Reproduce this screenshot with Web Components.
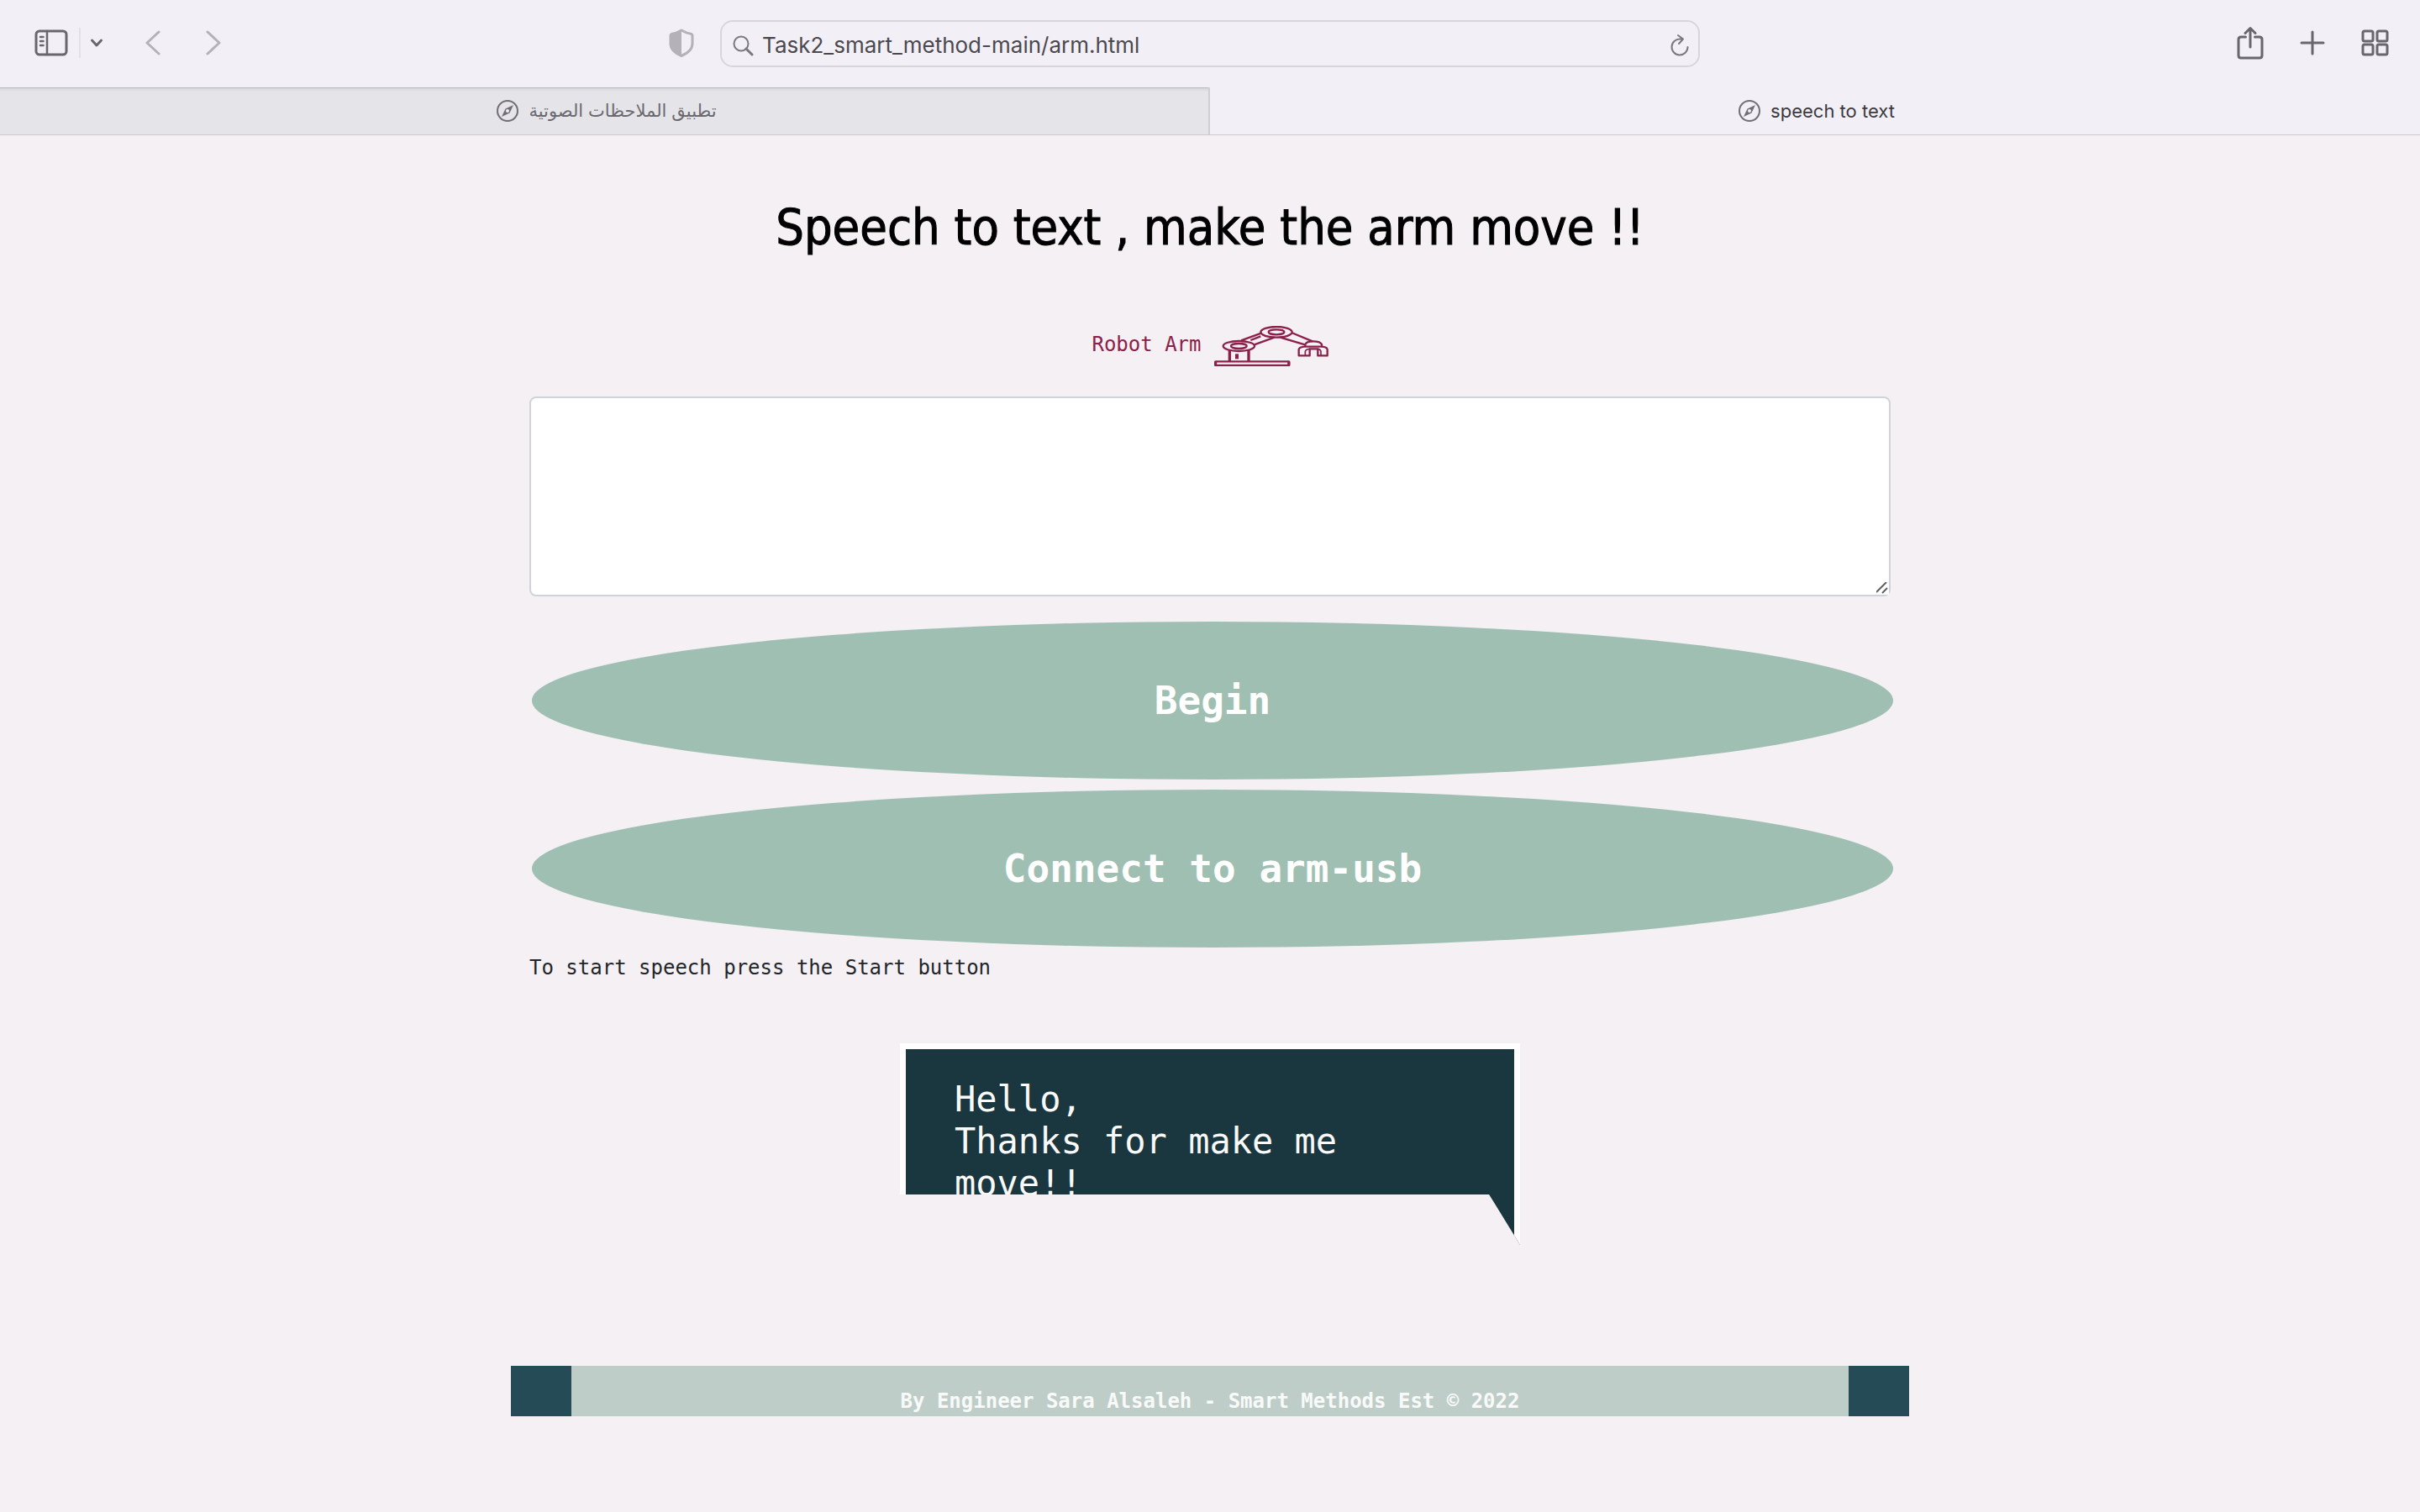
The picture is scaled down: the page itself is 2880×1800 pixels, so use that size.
<!DOCTYPE html>
<html lang="en">
<head>
<meta charset="utf-8">
<title>speech to text</title>
<style>
  body { margin: 0; min-height: 100vh; background: #f4f0f4; color: #212529; font: 24px/36px "DejaVu Sans Mono", "Liberation Mono", monospace; }
</style>
</head>
<body>
<browser-toolbar></browser-toolbar>
<tab-strip>
  <browser-tab dir="ltr"><span lang="ar" dir="rtl">تطبيق الملاحظات الصوتية</span></browser-tab>
  <browser-tab active>speech to text</browser-tab>
</tab-strip>
<speech-page>
  <span slot="title">Speech to text , make the arm move !!</span>
  <speech-note></speech-note>
  <div slot="actions">
    <oval-button>Begin</oval-button>
    <oval-button>Connect to arm-usb</oval-button>
  </div>
  <span slot="hint">To start speech press the Start button</span>
  <speech-bubble slot="bubble">Hello,<br>Thanks for make me move!!</speech-bubble>
  <page-footer slot="footer">By Engineer Sara Alsaleh - Smart Methods Est © 2022</page-footer>
</speech-page>

<script>
const define = (name, html) => customElements.define(name, class extends HTMLElement {
  constructor() {
    super();
    this.attachShadow({ mode: 'open' }).innerHTML = html;
  }
});

define('browser-toolbar', `
<style>
  :host { display: grid; grid-template-columns: 1fr minmax(400px, 1166px) 1fr; align-items: center; height: 104px; background: #f2f0f6; color: #69666d; font-family: Inter, "Liberation Sans", sans-serif; }
  button { display: block; padding: 0; border: 0; background: none; color: inherit; }
  svg { display: block; fill: none; stroke: currentColor; stroke-width: 3; stroke-linecap: round; stroke-linejoin: round; }
  .side { display: flex; align-items: center; align-self: start; height: 101px; }
  .left { padding: 0 31px 0 41px; }
  .faint { color: #b4b2b8; }
  .rule { width: 2px; height: 36px; margin: 0 11px 0 13px; background: #e3e1e7; }
  .back { margin-left: 50px; }
  .forward { margin-left: 54px; }
  .shield { margin-left: auto; }
  .right { justify-content: flex-end; gap: 43px; padding-right: 36px; }
  .address { display: flex; align-items: center; box-sizing: border-box; height: 56px; padding: 4px 10px 0 13px; border: 2px solid #d8d6dc; border-radius: 15px; }
  .address svg { stroke-width: 2; color: #7b787f; }
  input { flex: 1; min-width: 0; margin: 0 0 0 10px; padding: 0; border: 0; outline: 0; background: none; color: #4b494e; font: 26px/40px Inter, "Liberation Sans", sans-serif; }
</style>
<div class="side left">
  <button aria-label="Show sidebar"><svg width="40" height="32" viewBox="0 0 40 32"><rect x="2" y="2" width="36" height="28" rx="4"/><path d="M15 2V30M7 9h3.500M7 14h3.500M7 19h3.500" stroke-width="2.500"/></svg></button>
  <div class="rule"></div>
  <button aria-label="Tab groups"><svg width="16" height="12" viewBox="0 0 16 12"><path d="M2.500 3L8 9l5.500-6"/></svg></button>
  <button class="back faint" aria-label="Back"><svg width="18" height="30" viewBox="0 0 18 30"><path d="M16 2L2 15l14 13"/></svg></button>
  <button class="forward faint" aria-label="Forward"><svg width="18" height="30" viewBox="0 0 18 30"><path d="M2 2l14 13L2 28"/></svg></button>
  <button class="shield faint" aria-label="Privacy report"><svg width="30" height="34" viewBox="0 0 30 34"><path d="M15 2C11 4.500 7 6 3 6.500q-1 .5-1 2V18c0 7 6 11.500 13 14.500C22 29.500 28 25 28 18V8.500q0-1.500-1-2C23 6 19 4.500 15 2z"/><path d="M15 2v30C8 29 2 25 2 18V7c5-.5 9-2 13-5z" fill="currentColor" stroke="none"/></svg></button>
</div>
<div class="address">
  <svg width="25" height="25" viewBox="0 0 25 25"><circle cx="10" cy="10" r="8.500"/><path d="M16 16l7 7" stroke-width="3"/></svg>
  <input aria-label="Address" value="Task2_smart_method-main/arm.html">
  <button aria-label="Reload"><svg width="24" height="28" viewBox="0 0 24 28"><path d="M12.500 6.500A9.500 9.500 0 1 0 21.500 16M10 2l6 4.500L11 12M16 6.500H12"/></svg></button>
</div>
<div class="side right">
  <button aria-label="Share"><svg width="32" height="40" viewBox="0 0 32 40"><path d="M10.500 13H5q-3 0-3 3v19q0 3 3 3h22q3 0 3-3V16q0-3-3-3h-5.500M16 25V3M10 8.500l6-6 6 6"/></svg></button>
  <button aria-label="New tab"><svg width="30" height="30" viewBox="0 0 30 30"><path d="M15 2v26M2 15h26"/></svg></button>
  <button aria-label="Tab overview"><svg width="34" height="32" viewBox="0 0 34 32"><rect x="2" y="2" width="12" height="12" rx="2"/><rect x="19" y="2" width="12" height="12" rx="2"/><rect x="2" y="18" width="12" height="12" rx="2"/><rect x="19" y="18" width="12" height="12" rx="2"/></svg></button>
</div>`);

define('tab-strip', `
<style>
  :host { display: flex; border-bottom: 1px solid #cdcad0; background: #f2f0f6; }
</style>
<slot></slot>`);

define('browser-tab', `
<style>
  :host { flex: 1; --size: 22px; --ink: #3c3a40; }
  :host(:not([active])) { background: linear-gradient(#bdbbc1 0 1px, #d7d5db 1px, #e5e4e9 5px); box-shadow: inset -2px 0 #d0ced4; --ink: #6b696f; --size: 21px; }
  button { display: flex; align-items: center; justify-content: center; gap: 12px; width: 100%; height: 56px; padding: 0 0 0 4px; border: 0; background: none; color: var(--ink); font: var(--size)/32px Inter, "DejaVu Sans", sans-serif; }
  svg { display: block; fill: none; stroke: #716f75; stroke-width: 2; }
</style>
<button><svg width="26" height="26" viewBox="0 0 26 26"><circle cx="13" cy="13" r="12"/><path d="M20 6l-4.500 9.500L6 20l4.500-9.500z" fill="#716f75" stroke="none"/><circle cx="13" cy="13" r="2" fill="#f2f0f6" stroke="none"/></svg><slot></slot></button>`);

define('speech-page', `
<style>
  :host { display: block; box-sizing: border-box; max-width: 1664px; margin: 0 auto; padding-top: 70px; }
  h1 { margin: 0 0 77px; color: #000; font: 400 59px/80px "DejaVu Sans Condensed", "Noto Sans", sans-serif; text-align: center; -webkit-text-stroke: 1px #000; }
  .form { padding: 0 22px; }
  p { margin: 6px 0 72px; }
</style>
<h1><slot name="title"></slot></h1>
<div class="form">
  <slot></slot>
  <slot name="actions"></slot>
  <p><slot name="hint"></slot></p>
</div>
<slot name="bubble"></slot>
<slot name="footer"></slot>`);

define('speech-note', `
<style>
  :host { display: block; margin-bottom: 30px; }
  label { display: flex; justify-content: center; align-items: center; gap: 15px; margin-bottom: 36px; color: #8b2049; }
  span { padding-bottom: 4px; }
  svg { display: block; fill: none; stroke: currentColor; stroke-width: 7; stroke-linejoin: round; }
  textarea { display: block; box-sizing: border-box; width: 100%; height: 238px; padding: 12px 24px; border: 2px solid #ced4da; border-radius: 8px; background: #fff; color: #495057; font: inherit; resize: vertical; outline: 0; }
  textarea::-webkit-resizer { background: #fff url("data:image/svg+xml,%3Csvg xmlns='http://www.w3.org/2000/svg' viewBox='0 0 15 15'%3E%3Cpath d='M0 12L12 0M7 13l6-6' stroke='%23606060' stroke-width='2'/%3E%3C/svg%3E"); }
</style>
<label for="note"><span>Robot Arm</span>
  <svg width="136" height="48" viewBox="0 0 408 144">
    <rect x="4" y="127" width="264" height="14" rx="3"/><path d="M5 125v18M266 125v18" stroke-width="9"/>
    <path d="M55 84v42M123 84v42" stroke-width="10"/><path d="M81 100v18" stroke-width="12"/>
    <ellipse cx="88" cy="72" rx="56" ry="18"/><ellipse cx="88" cy="72" rx="28" ry="9"/>
    <ellipse cx="222" cy="22" rx="56" ry="19"/><ellipse cx="222" cy="22" rx="28" ry="9"/>
    <path d="M96 52l74-27M143 67l72-26M130 51l36-14M276 24l75 31M236 41l88 26"/>
    <path d="M325 74v-8q4-11 28-11 26 0 31 11v8"/>
    <path d="M302 106V84q2-9 22-10h60q18 1 20 10v22h-34V82h-29v24z"/>
    <path d="M325 106V92q1-9 16-10M381 106V92q-1-9-11-10" stroke-width="5"/>
  </svg>
</label>
<textarea id="note"></textarea>`);

define('oval-button', `
<style>
  :host { display: block; margin: 0 -3px 12px 3px; }
  :host(:last-child) { margin-bottom: 0; }
  button { display: block; width: 100%; height: 188px; padding: 0; border: 0; border-radius: 50%; background: #a0bfb3; color: #fff; font: bold 46px/56px "DejaVu Sans Mono", "Liberation Mono", monospace; }
</style>
<button><slot></slot></button>`);

define('speech-bubble', `
<style>
  :host { display: block; box-sizing: border-box; max-width: 738px; height: 240px; margin: 0 auto 144px; padding: 35px 58px 0; border: 7px solid #fff; background: #1a363f; color: #f9f9f9; font-size: 42px; line-height: 50px; clip-path: polygon(0 0, 100% 0, 100% 100%, 95% 75%, 0 75%); }
</style>
<slot></slot>`);

define('page-footer', `
<style>
  :host { display: block; padding-top: 24px; border: solid #254b56; border-width: 0 72px; background: #bfcdc8; color: #f8faf9; font-weight: bold; text-align: center; }
</style>
<footer><slot></slot></footer>`);
</script>
</body>
</html>
